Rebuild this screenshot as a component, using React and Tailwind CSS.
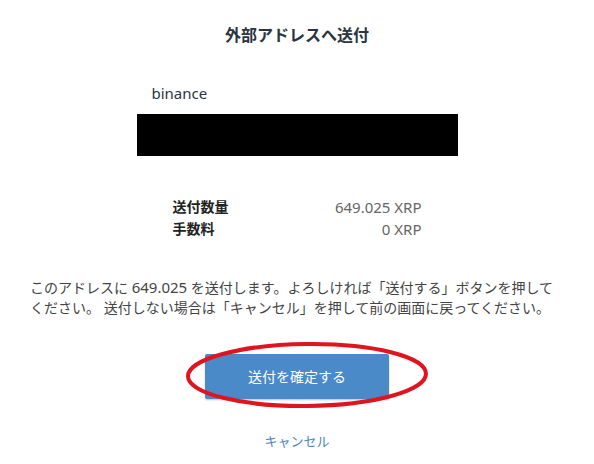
import React from 'react';

const rows = [
  { label: '送付数量', value: '649.025 XRP' },
  { label: '手数料', value: '0 XRP' },
];

export default function App() {
  return (
    <div className="w-full h-[464px] bg-white flex flex-col items-center font-['Noto_Sans','Noto_Sans_CJK_JP',sans-serif] text-[#333]">
      {/* Title */}
      <h1 className="pt-[23px] text-[16px] leading-[24px] font-bold text-[#2b3440]">
        外部アドレスへ送付
      </h1>

      {/* Destination */}
      <div className="mt-[36px] w-[321px]">
        <div className="pl-[15px] text-[15px] leading-[20px] text-[#2b3440]">binance</div>
        <div className="mt-[11px] h-[42px] bg-black" />
      </div>

      {/* Amount rows */}
      <div className="mt-[40px] w-[249px] flex flex-col">
        {rows.map((r) => (
          <div key={r.label} className="flex justify-between items-center text-[14px] leading-[22px]">
            <span className="font-bold text-[#222]">{r.label}</span>
            <span className="text-[15px] text-[#666]">{r.value}</span>
          </div>
        ))}
      </div>

      {/* Message */}
      <p className="mt-[37px] self-stretch px-[30px] text-[14px] leading-[20px] text-[#444]">
        このアドレスに <span className="text-[15px]">649.025</span> を送付します。よろしければ「送付する」ボタンを押して
        <br />
        ください。 送付しない場合は「キャンセル」を押して前の画面に戻ってください。
      </p>

      {/* Confirm */}
      <div className="relative mt-[36px]">
        <button className="w-[184px] h-[45px] bg-[#4a8ac9] text-white text-[14px] rounded-[2px] shadow-[0_1px_2px_rgba(0,0,0,0.25)]">
          送付を確定する
        </button>
        <svg
          className="absolute left-[-21px] top-[-13px] pointer-events-none"
          width="246"
          height="70"
          viewBox="0 0 246 70"
        >
          <ellipse
            cx="123"
            cy="34"
            rx="119"
            ry="31"
            fill="none"
            stroke="#e0141e"
            strokeWidth="4"
            transform="rotate(-0.6 123 34)"
          />
        </svg>
      </div>

      <a href="#" className="mt-[32px] text-[13px] leading-[20px] text-[#4a86c0]">
        キャンセル
      </a>
    </div>
  );
}
